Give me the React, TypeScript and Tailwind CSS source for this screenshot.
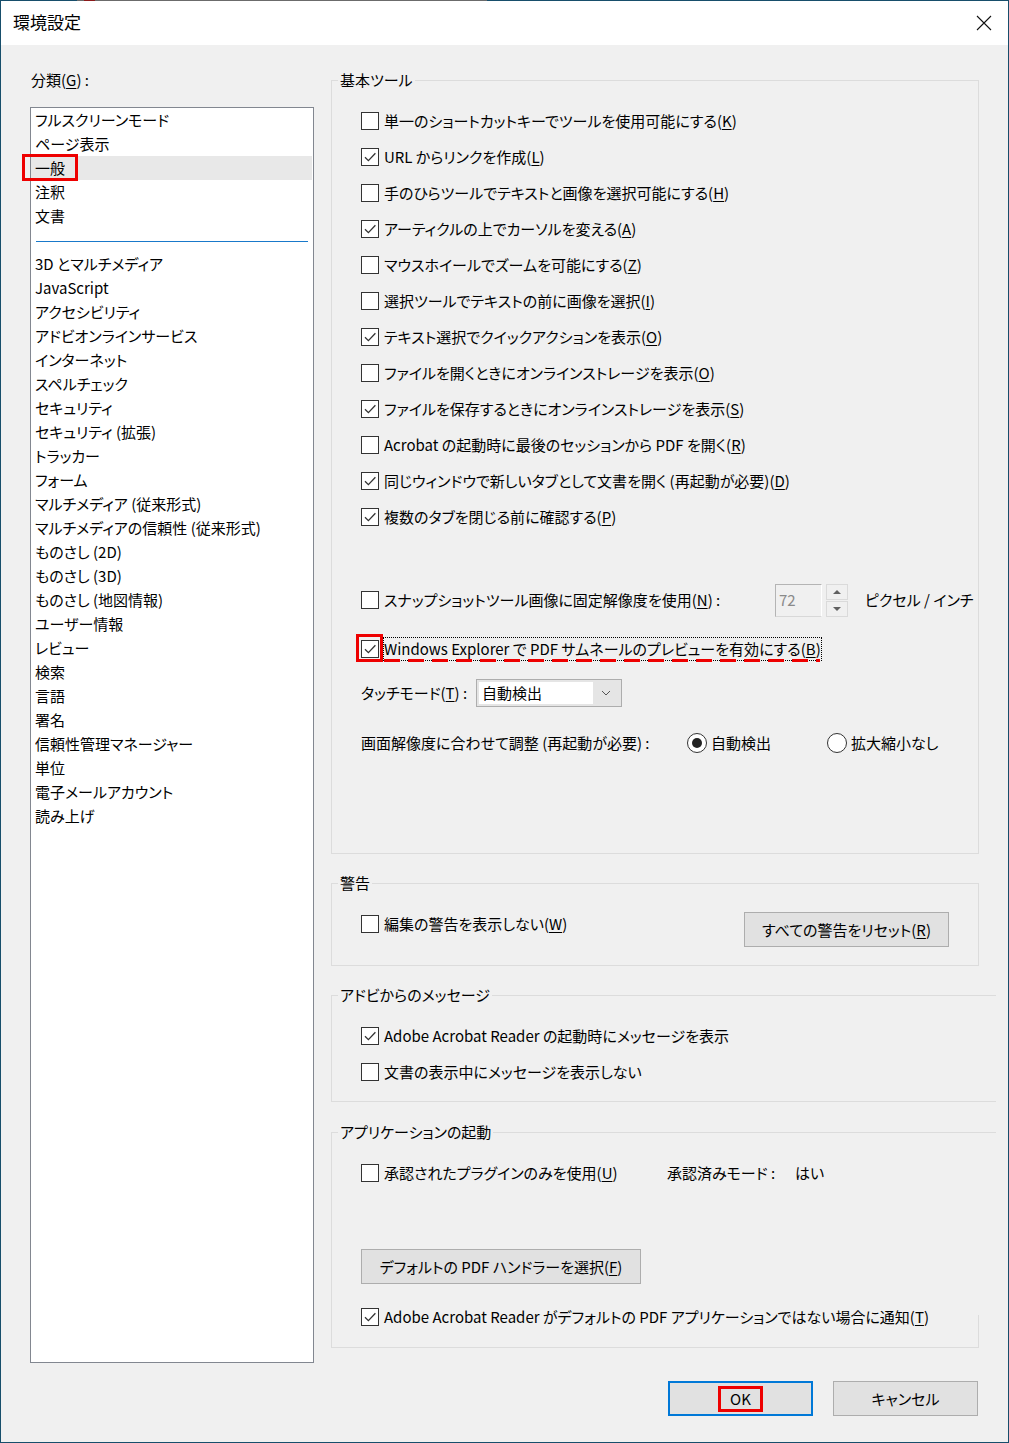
import React from 'react';

const basicRows = [
  { checked: false, text: '単一のショートカットキーでツールを使用可能にする', key: 'K' },
  { checked: true, text: 'URL からリンクを作成', key: 'L' },
  { checked: false, text: '手のひらツールでテキストと画像を選択可能にする', key: 'H' },
  { checked: true, text: 'アーティクルの上でカーソルを変える', key: 'A' },
  { checked: false, text: 'マウスホイールでズームを可能にする', key: 'Z' },
  { checked: false, text: '選択ツールでテキストの前に画像を選択', key: 'I' },
  { checked: true, text: 'テキスト選択でクイックアクションを表示', key: 'O' },
  { checked: false, text: 'ファイルを開くときにオンラインストレージを表示', key: 'O' },
  { checked: true, text: 'ファイルを保存するときにオンラインストレージを表示', key: 'S' },
  { checked: false, text: 'Acrobat の起動時に最後のセッションから PDF を開く', key: 'R' },
  { checked: true, text: '同じウィンドウで新しいタブとして文書を開く (再起動が必要)', key: 'D' },
  { checked: true, text: '複数のタブを閉じる前に確認する', key: 'P' },
];

const topCategories = ['フルスクリーンモード', 'ページ表示', '一般', '注釈', '文書'];
const otherCategories = [
  '3D とマルチメディア',
  'JavaScript',
  'アクセシビリティ',
  'アドビオンラインサービス',
  'インターネット',
  'スペルチェック',
  'セキュリティ',
  'セキュリティ (拡張)',
  'トラッカー',
  'フォーム',
  'マルチメディア (従来形式)',
  'マルチメディアの信頼性 (従来形式)',
  'ものさし (2D)',
  'ものさし (3D)',
  'ものさし (地図情報)',
  'ユーザー情報',
  'レビュー',
  '検索',
  '言語',
  '署名',
  '信頼性管理マネージャー',
  '単位',
  '電子メールアカウント',
  '読み上げ',
];

const Check = ({ checked }: { checked: boolean }) => (
  <span className="w-[18px] h-[18px] shrink-0 border border-[#333] bg-white flex items-center justify-center">
    {checked && (
      <svg width="14" height="14" viewBox="0 0 14 14">
        <path d="M2 7.2 L5.4 10.6 L12.4 3.2" stroke="#333" strokeWidth="1.3" fill="none" />
      </svg>
    )}
  </span>
);

const Radio = ({ checked }: { checked: boolean }) => (
  <span className="w-[20px] h-[20px] shrink-0 rounded-full border border-[#333] bg-white flex items-center justify-center">
    {checked && <span className="w-[10px] h-[10px] rounded-full bg-[#222]" />}
  </span>
);

const Key = ({ k }: { k: string }) => (
  <>
    (<u className="underline-offset-2">{k}</u>)
  </>
);

const CheckRow = ({ checked, children }: { checked: boolean; children: React.ReactNode }) => (
  <div className="h-[36px] flex items-center pl-[29px]">
    <Check checked={checked} />
    <span className="ml-[5px] whitespace-nowrap">{children}</span>
  </div>
);

const Legend = ({ children }: { children: React.ReactNode }) => (
  <legend className="ml-[6px] px-[2px] leading-6">{children}</legend>
);

export default function App() {
  return (
    <div className="w-[1009px] h-[1443px] flex flex-col border-x border-b border-[#174e6b] bg-[#f0f0f0] text-black text-[15px] leading-6 font-['Noto_Sans_CJK_JP',sans-serif] [font-feature-settings:'palt'] overflow-hidden">
      {/* top edge */}
      <div className="flex h-[1px] -mx-[1px]">
        <div className="w-[77px] bg-[#174e6b]" />
        <div className="w-[7px] bg-[#6b6b6b]" />
        <div className="w-[11px] bg-[#8b1a1a]" />
        <div className="w-[392px] bg-[#6b6b6b]" />
        <div className="flex-1 bg-[#174e6b]" />
      </div>

      {/* title bar */}
      <div className="h-[44px] bg-white flex items-center justify-between pl-[12px] pr-[16px]">
        <span className="text-[17px] -mt-[2px]">環境設定</span>
        <svg width="16" height="16" viewBox="0 0 16 16">
          <path d="M1 1 L15 15 M15 1 L1 15" stroke="#111" strokeWidth="1.1" />
        </svg>
      </div>

      <div className="flex-1 flex pt-[23px] pl-[29px] gap-[17px]">
        {/* categories */}
        <div className="w-[284px] flex flex-col">
          <div className="h-[24px] pl-[1px]">
            分類(<u className="underline-offset-2">G</u>) :
          </div>
          <div className="mt-[15px] h-[1256px] border border-[#828790] bg-white flex flex-col">
            {topCategories.map((c) => (
              <div
                key={c}
                className={
                  c === '一般'
                    ? 'relative h-[24px] pl-[4px] bg-[#e8e8e8] mr-[1px]'
                    : 'h-[24px] pl-[4px]'
                }
              >
                {c}
                {c === '一般' && (
                  <span className="absolute -left-[9px] -top-[2px] w-[56px] h-[27px] border-[3px] border-[#ee0000]" />
                )}
              </div>
            ))}
            <div className="h-[24px] flex items-center px-[5px]">
              <div className="h-[1px] flex-1 bg-[#1979ca] mt-[2px]" />
            </div>
            {otherCategories.map((c) => (
              <div key={c} className="h-[24px] pl-[4px] whitespace-nowrap">
                {c}
              </div>
            ))}
          </div>
        </div>

        {/* settings */}
        <div className="w-[648px] flex flex-col">
          <fieldset className="h-[786px] min-w-0 border border-[#dcdcdc] p-0 w-[648px]">
            <Legend>基本ツール</Legend>
            <div className="pt-[11px]">
              {basicRows.map((r, i) => (
                <CheckRow key={i} checked={r.checked}>
                  {r.text}
                  <Key k={r.key} />
                </CheckRow>
              ))}
            </div>

            <div className="mt-[47px] h-[36px] flex items-center pl-[29px]">
              <div className="w-[414px] flex items-center">
                <Check checked={false} />
                <span className="ml-[5px] whitespace-nowrap">
                  スナップショットツール画像に固定解像度を使用<Key k="N" /> :
                </span>
              </div>
              <div className="w-[47px] h-[33px] border border-[#b4b4b4] border-r-white border-b-[#d8d8d8] flex items-center pl-[3px] text-[#8a8a8a]">
                72
              </div>
              <div className="ml-[4px] w-[22px] flex flex-col gap-[1px]">
                <div className="h-[16px] border border-[#dadada] flex items-center justify-center">
                  <svg width="10" height="6" viewBox="0 0 10 6">
                    <path d="M1 5 L5 1 L9 5 Z" fill="#606060" />
                  </svg>
                </div>
                <div className="h-[16px] border border-[#dadada] flex items-center justify-center">
                  <svg width="10" height="6" viewBox="0 0 10 6">
                    <path d="M1 1 L5 5 L9 1 Z" fill="#606060" />
                  </svg>
                </div>
              </div>
              <span className="ml-[17px] whitespace-nowrap">ピクセル / インチ</span>
            </div>

            <div className="mt-[13px] h-[36px] flex items-center pl-[29px]">
              <span className="relative">
                <Check checked={true} />
                <span className="absolute -left-[5px] -top-[6px] w-[27px] h-[28px] border-[3px] border-[#ee0000]" />
              </span>
              <span className="relative ml-[4px] border border-dotted border-black leading-[22px] whitespace-nowrap">
                Windows Explorer で PDF サムネールのプレビューを有効にする<Key k="B" />
                <span className="absolute left-0 right-[1px] -bottom-[2px] h-[3px] bg-[repeating-linear-gradient(90deg,#ee0000_0_16px,transparent_16px_24px)]" />
              </span>
            </div>

            <div className="mt-[8px] h-[36px] flex items-center pl-[29px]">
              <span className="w-[115px] whitespace-nowrap">
                タッチモード<Key k="T" /> :
              </span>
              <div className="w-[146px] h-[28px] border border-[#adadad] bg-[#e5e5e5] flex p-[2px]">
                <div className="flex-1 bg-white pl-[3px] leading-[22px]">自動検出</div>
                <div className="w-[26px] flex items-center justify-center">
                  <svg width="10" height="6" viewBox="0 0 10 6">
                    <path d="M1 1 L5 5 L9 1" stroke="#555" strokeWidth="1" fill="none" />
                  </svg>
                </div>
              </div>
            </div>

            <div className="mt-[14px] h-[36px] flex items-center pl-[29px]">
              <span className="w-[326px] whitespace-nowrap">画面解像度に合わせて調整 (再起動が必要) :</span>
              <div className="w-[140px] flex items-center">
                <Radio checked={true} />
                <span className="ml-[4px]">自動検出</span>
              </div>
              <Radio checked={false} />
              <span className="ml-[4px]">拡大縮小なし</span>
            </div>
          </fieldset>

          <fieldset className="mt-[17px] h-[95px] min-w-0 border border-[#dcdcdc] p-0 w-[648px]">
            <Legend>警告</Legend>
            <div className="pt-[11px] flex items-start pr-[29px]">
              <CheckRow checked={false}>
                編集の警告を表示しない<Key k="W" />
              </CheckRow>
              <button className="ml-auto mt-[6px] w-[205px] h-[35px] border border-[#adadad] bg-[#e1e1e1]">
                すべての警告をリセット<Key k="R" />
              </button>
            </div>
          </fieldset>

          <fieldset className="mt-[17px] h-[119px] min-w-0 border-l border-t border-b border-[#dcdcdc] p-0 w-[665px]">
            <Legend>アドビからのメッセージ</Legend>
            <div className="pt-[11px]">
              <CheckRow checked={true}>Adobe Acrobat Reader の起動時にメッセージを表示</CheckRow>
              <CheckRow checked={false}>文書の表示中にメッセージを表示しない</CheckRow>
            </div>
          </fieldset>

          <div className="mt-[18px] w-[648px] border-b border-[#dcdcdc]">
            <fieldset className="min-w-0 border-l border-t border-[#dcdcdc] p-0 w-[665px]">
              <Legend>アプリケーションの起動</Legend>
              <div className="pt-[11px] h-[47px] flex items-center">
                <div className="w-[335px]">
                  <CheckRow checked={false}>
                    承認されたプラグインのみを使用<Key k="U" />
                  </CheckRow>
                </div>
                <span className="w-[128px]">承認済みモード :</span>
                <span>はい</span>
              </div>
              <button className="ml-[29px] mt-[58px] w-[280px] h-[35px] border border-[#adadad] bg-[#e1e1e1]">
                デフォルトの PDF ハンドラーを選択<Key k="F" />
              </button>
              <div className="mt-[15px]">
                <CheckRow checked={true}>
                  Adobe Acrobat Reader がデフォルトの PDF アプリケーションではない場合に通知<Key k="T" />
                </CheckRow>
              </div>
              <div className="-mt-[20px] h-[32px] w-[647px] border-r border-[#dcdcdc]" />
            </fieldset>
          </div>

          <div className="mt-[33px] flex justify-end gap-[20px] pr-[1px]">
            <button className="w-[145px] h-[35px] border-2 border-[#0078d7] bg-[#e1e1e1] flex items-center justify-center">
              <span className="border-[3px] border-[#ee0000] px-[9px] leading-[20px]">OK</span>
            </button>
            <button className="w-[145px] h-[35px] border border-[#adadad] bg-[#e1e1e1]">キャンセル</button>
          </div>
        </div>
      </div>
    </div>
  );
}
